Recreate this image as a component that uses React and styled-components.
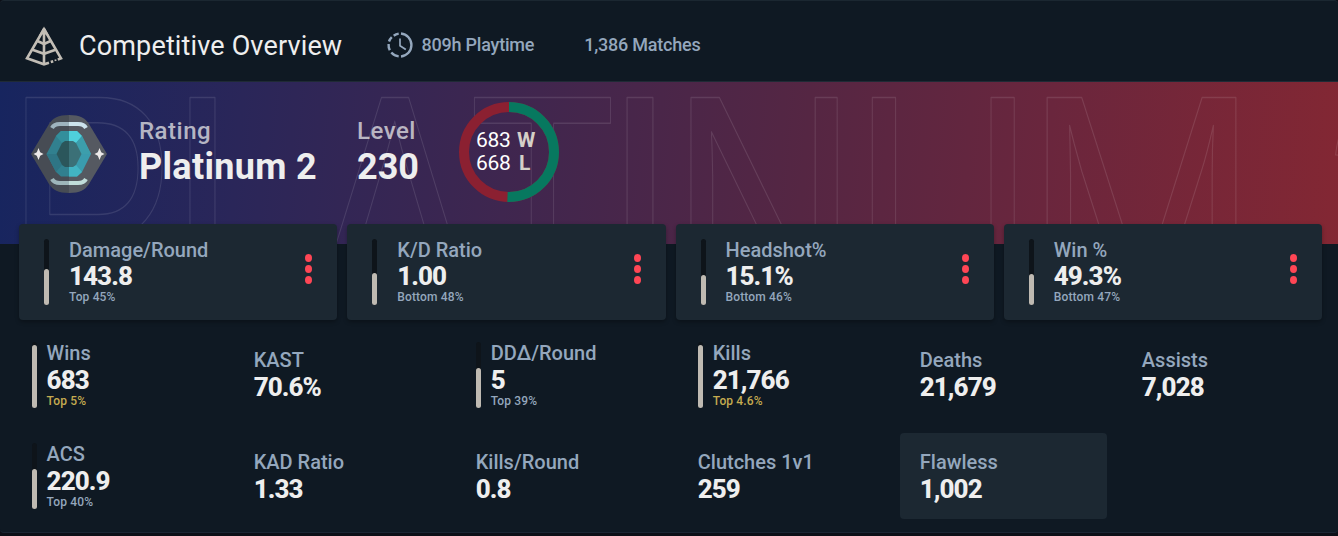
import React from "react";
import styled, { createGlobalStyle } from "styled-components";

const GlobalStyle = createGlobalStyle`
  * { box-sizing: border-box; }
  body { margin: 0; background: #0c0f17; font-family: Roboto, "Liberation Sans", sans-serif; }
`;

const Page = styled.main`
  width: 1338px;
  height: 536px;
  overflow: hidden;
  background: #0c0f17;
`;

const Panel = styled.section`
  height: 533px;
  border-top: 1px solid #1b2731;
  border-bottom: 1px solid #1b2534;
  border-radius: 4px;
  background: #0f1923;
  overflow: hidden;
`;

const Header = styled.header`
  display: flex;
  align-items: center;
  height: 81px;
  padding: 9px 0 0 24px;
  border-bottom: 1px solid #1f2a35;
`;

const Title = styled.h1`
  margin: 0 0 0 15px;
  width: 307.5px;
  font-size: 27px;
  font-weight: 400;
  letter-spacing: 0.15px;
  line-height: 32px;
  color: #eeeeee;
  white-space: nowrap;
`;

const HeaderStat = styled.div`
  display: flex;
  align-items: center;
  gap: 9px;
  margin: 0 50px 2px 0;
  font-size: 18px;
  font-weight: 500;
  line-height: 24px;
  letter-spacing: -0.22px;
  color: #94a7bd;
  white-space: nowrap;
`;

const Banner = styled.div`
  position: relative;
  height: 162px;
  overflow: hidden;
  background: linear-gradient(95deg, #17255f 0%, #2a2659 18%, #3f264f 38%, #552643 60%, #6a263d 78%, #832733 100%);
`;

const Watermark = styled.svg`
  position: absolute;
  inset: 0;
  font-family: "Liberation Sans", sans-serif;
  font-weight: 400;
  font-size: 338px;
  fill: none;
  stroke: rgba(255, 255, 255, 0.11);
  stroke-width: 1.4px;
  stroke-linejoin: round;
`;

const BannerContent = styled.div`
  position: relative;
  display: flex;
  align-items: flex-start;
  padding: 20px 0 0 31px;
`;

const BadgeIcon = styled.svg`
  display: block;
  margin-top: 12px;
`;

const Figure = styled.div`
  width: ${(p) => p.$width}px;
  margin: 15px 0 0 ${(p) => p.$gap}px;
  white-space: nowrap;
`;

const FigureLabel = styled.div`
  font-size: 24px;
  font-weight: 500;
  line-height: 29px;
  letter-spacing: 0.5px;
  color: rgba(238, 238, 238, 0.72);
`;

const FigureValue = styled.div`
  font-size: 36px;
  font-weight: 700;
  line-height: 42px;
  letter-spacing: ${(p) => p.$spacing || 0}px;
  color: #eeeeee;
`;

const Record = styled.div`
  display: grid;
  width: 100px;
  height: 100px;
  margin-left: 42px;
`;

const Ring = styled.svg`
  grid-area: 1 / 1;
`;

const RecordLines = styled.div`
  grid-area: 1 / 1;
  padding: 27px 0 0 17px;
`;

const RecordLine = styled.div`
  display: grid;
  grid-template-columns: 35px 24px;
  column-gap: 6px;
  font-size: 21px;
  line-height: 23px;
  letter-spacing: -0.3px;
  color: #ffffff;

  b {
    font-weight: 700;
    color: #d5cfc8;
    padding-left: ${(p) => p.$indent || 0}px;
  }
`;

const Cards = styled.div`
  position: relative;
  display: grid;
  grid-template-columns: repeat(4, 1fr);
  gap: 10px;
  margin-top: -20px;
  padding: 0 16px 0 19px;
`;

const Card = styled.article`
  display: flex;
  align-items: center;
  height: 96px;
  padding: 0 25px;
  border-radius: 4px;
  background: #1c2832;
  box-shadow: 0 2px 4px rgba(0, 0, 0, 0.3);
`;

const Track = styled.div`
  display: flex;
  flex-direction: column;
  justify-content: flex-end;
  width: 5px;
  height: 66px;
  margin-right: ${(p) => p.$gap}px;
  border-radius: 3px;
  background: #0e141a;
  flex: none;
`;

const Level = styled.div`
  border-radius: 3px;
  background: #bfbab2;
`;

const StatText = styled.div`
  flex: 1;
  padding: ${(p) => p.$padding};
  white-space: nowrap;
`;

const Label = styled.div`
  font-size: 20px;
  font-weight: 500;
  line-height: 23px;
  color: #94a7bd;
`;

const Value = styled.div`
  margin-top: ${(p) => (p.$tight ? 0 : 1)}px;
  font-size: 26px;
  font-weight: 800;
  line-height: 28px;
  letter-spacing: -0.95px;
  color: #eeeeee;
`;

const Rank = styled.div`
  font-size: 12px;
  font-weight: 500;
  line-height: 14px;
  letter-spacing: 0.15px;
  color: ${(p) => (p.$gold ? "#c5ab50" : "#94a7bd")};
`;

const MenuDots = styled.div`
  display: flex;
  flex-direction: column;
  gap: 3px;
  margin-top: -6px;

  i {
    width: 7px;
    height: 8px;
    border-radius: 50%;
    background: #ff4655;
  }
`;

const StatGrid = styled.div`
  display: grid;
  grid-template-columns: repeat(6, 207px);
  grid-auto-rows: 86px;
  gap: 15.5px 15.05px;
  padding: 11.5px 0 0 11.6px;
`;

const Cell = styled.div`
  display: flex;
  align-items: center;
  padding: 0 20px;
  border-radius: 4px;
  background: ${(p) => (p.$active ? "#1c2832" : "transparent")};
`;

const cards = [
  { label: "Damage/Round", value: "143.8", rank: "Top 45%", level: 36 },
  { label: "K/D Ratio", value: "1.00", rank: "Bottom 48%", level: 32 },
  { label: "Headshot%", value: "15.1%", rank: "Bottom 46%", level: 30 },
  { label: "Win %", value: "49.3%", rank: "Bottom 47%", level: 31 },
];

const stats = [
  { label: "Wins", value: "683", rank: "Top 5%", level: 63, gold: true },
  { label: "KAST", value: "70.6%" },
  { label: "DDΔ/Round", value: "5", rank: "Top 39%", level: 40 },
  { label: "Kills", value: "21,766", rank: "Top 4.6%", level: 63, gold: true },
  { label: "Deaths", value: "21,679" },
  { label: "Assists", value: "7,028" },
  { label: "ACS", value: "220.9", rank: "Top 40%", level: 40 },
  { label: "KAD Ratio", value: "1.33" },
  { label: "Kills/Round", value: "0.8" },
  { label: "Clutches 1v1", value: "259" },
  { label: "Flawless", value: "1,002", active: true },
];

const letters = [
  { char: "P", x: 5, width: 170.5 },
  { char: "L", x: 168, width: 149 },
  { char: "A", x: 309, width: 171 },
  { char: "T", x: 469, width: 147 },
  { char: "I", x: 601.5, width: 77 },
  { char: "N", x: 669.5, width: 189 },
  { char: "U", x: 853, width: 180.5 },
  { char: "M", x: 1024, width: 235 },
  { char: "2", x: 1321, width: 150 },
];

function Meter({ level, gap }) {
  return (
    <Track $gap={gap}>
      <Level style={{ height: level }} />
    </Track>
  );
}

function StatBlock({ stat, tight }) {
  const padding = tight ? "0 0 1px" : stat.rank ? "0" : "1.2px 0 0";
  return (
    <StatText $padding={padding}>
      <Label>{stat.label}</Label>
      <Value $tight={tight}>{stat.value}</Value>
      {stat.rank && <Rank $gold={stat.gold}>{stat.rank}</Rank>}
    </StatText>
  );
}

function PyramidIcon() {
  return (
    <svg width="40" height="42" viewBox="0 0 40 42" fill="none" stroke="#c2bdb5" strokeWidth="2.6">
      <path d="M20 4 L3 33.3 L20 39.3 L25 37.8 M20 4 L37 33.3 L33.8 34.6" />
      <path d="M20 4 V39" />
      <path d="M13.5 16 L20 19 L26.5 16 M8.5 24.8 L20 28.8 L31.5 24.8" />
      <path d="M26.8 37 L29.2 36.2" />
      <path d="M30.6 35.6 L32.4 35" strokeWidth="1.6" />
      <path d="M20 1.5 L25 10.5 L20 9 L15 10.5 Z" fill="#c2bdb5" stroke="none" />
    </svg>
  );
}

function ClockIcon() {
  return (
    <svg width="26" height="26" viewBox="0 0 26 26" fill="none" stroke="#94a7bd" strokeWidth="2.4">
      <path d="M14 1.55 A11.5 11.5 0 0 1 14 24.45" />
      <path d="M11.7 1.6 A11.5 11.5 0 0 0 6.7 3.7 M4.8 5.1 A11.5 11.5 0 0 0 2 9.5 M1.6 12 A11.5 11.5 0 0 0 2.8 18.2 M4.3 20.5 A11.5 11.5 0 0 0 11.7 24.4" />
      <path d="M13 6.5 V13.7 L18.8 17.5" strokeWidth="1.7" />
    </svg>
  );
}

function RankBadge() {
  return (
    <BadgeIcon width="76" height="80" viewBox="0 0 76 80">
      <path d="M38 1 C27 1 22 4 18 10 L0 40 L18 70 C22 76 27 79 38 79Z" fill="#474c54" />
      <path d="M38 1 C49 1 54 4 58 10 L76 40 L58 70 C54 76 49 79 38 79Z" fill="#555961" />
      <path d="M21 14 Q23 10 29 10 H38" fill="none" stroke="#9eb3bd" strokeWidth="4" />
      <path d="M55 14 Q53 10 47 10 H38" fill="none" stroke="#cce3ec" strokeWidth="4" />
      <path d="M21 65 Q23 69 29 69 H38" fill="none" stroke="#9eb6ba" strokeWidth="4" />
      <path d="M55 65 Q53 69 47 69 H38" fill="none" stroke="#c0ddda" strokeWidth="4" />
      <path d="M38 17 H30 L25 22 L15.5 40 L25 58 L30 62.5 H38Z" fill="#31808f" />
      <path d="M38 17 H46 L51 22 L60 40 L51 58 L46 62.5 H38Z" fill="#3a9bad" />
      <path d="M38 17 H46 L51 22 L45 29 L38 27Z" fill="#4fd0dc" />
      <path d="M51 22 L60 40 H50 L45 29Z" fill="#3c9eac" />
      <path d="M30 17 L25 22 L31 29 L38 27 V17Z" fill="#338f9c" />
      <path d="M15.5 40 L25 58 L31 51 L25.5 40Z" fill="#2e7585" />
      <path d="M38 53 L45 51 L51 58 L46 62.5 H38Z" fill="#42b4c3" />
      <path d="M38 27 H34 L31 29 L25.5 40 L31 51 L34 53 H38Z" fill="#2b565b" />
      <path d="M38 27 H42 L45 29 L50.5 40 L45 51 L42 53 H38Z" fill="#3b7077" />
      <g fill="#ece9e9">
        <path d="M7.5 34 L9.2 38.2 L12.5 40 L9.2 41.8 L7.5 46 L5.8 41.8 L2.5 40 L5.8 38.2Z" />
        <path d="M68.5 34 L70.2 38.2 L73.5 40 L70.2 41.8 L68.5 46 L66.8 41.8 L63.5 40 L66.8 38.2Z" />
      </g>
    </BadgeIcon>
  );
}

function WinRing() {
  return (
    <Ring width="100" height="100" viewBox="0 0 100 100" fill="none" strokeWidth="10">
      <circle cx="50" cy="50" r="45" stroke="#8b2031" />
      <circle cx="50" cy="50" r="45" stroke="#07785f" pathLength="1351" strokeDasharray="683 668" transform="rotate(-90 50 50)" />
    </Ring>
  );
}

export default function App() {
  return (
    <Page>
      <GlobalStyle />
      <Panel>
        <Header>
          <PyramidIcon />
          <Title>Competitive Overview</Title>
          <HeaderStat>
            <ClockIcon />
            <span>809h Playtime</span>
          </HeaderStat>
          <HeaderStat>1,386 Matches</HeaderStat>
        </Header>
        <Banner>
          <Watermark width="1338" height="162" aria-hidden="true">
            {letters.map((l) => (
              <text key={l.x} x={l.x} y="248" textLength={l.width} lengthAdjust="spacingAndGlyphs">
                {l.char}
              </text>
            ))}
          </Watermark>
          <BannerContent>
            <RankBadge />
            <Figure $width={178} $gap={32}>
              <FigureLabel>Rating</FigureLabel>
              <FigureValue $spacing={0.3}>Platinum 2</FigureValue>
            </Figure>
            <Figure $width={60} $gap={40}>
              <FigureLabel>Level</FigureLabel>
              <FigureValue>230</FigureValue>
            </Figure>
            <Record>
              <WinRing />
              <RecordLines>
                <RecordLine>
                  683 <b>W</b>
                </RecordLine>
                <RecordLine $indent={2}>
                  668 <b>L</b>
                </RecordLine>
              </RecordLines>
            </Record>
          </BannerContent>
        </Banner>
        <Cards>
          {cards.map((c) => (
            <Card key={c.label}>
              <Meter level={c.level} gap={20} />
              <StatBlock stat={c} tight />
              <MenuDots>
                <i />
                <i />
                <i />
              </MenuDots>
            </Card>
          ))}
        </Cards>
        <StatGrid>
          {stats.map((s) => (
            <Cell key={s.label} $active={s.active}>
              {s.rank && <Meter level={s.level} gap={10} />}
              <StatBlock stat={s} />
            </Cell>
          ))}
        </StatGrid>
      </Panel>
    </Page>
  );
}
